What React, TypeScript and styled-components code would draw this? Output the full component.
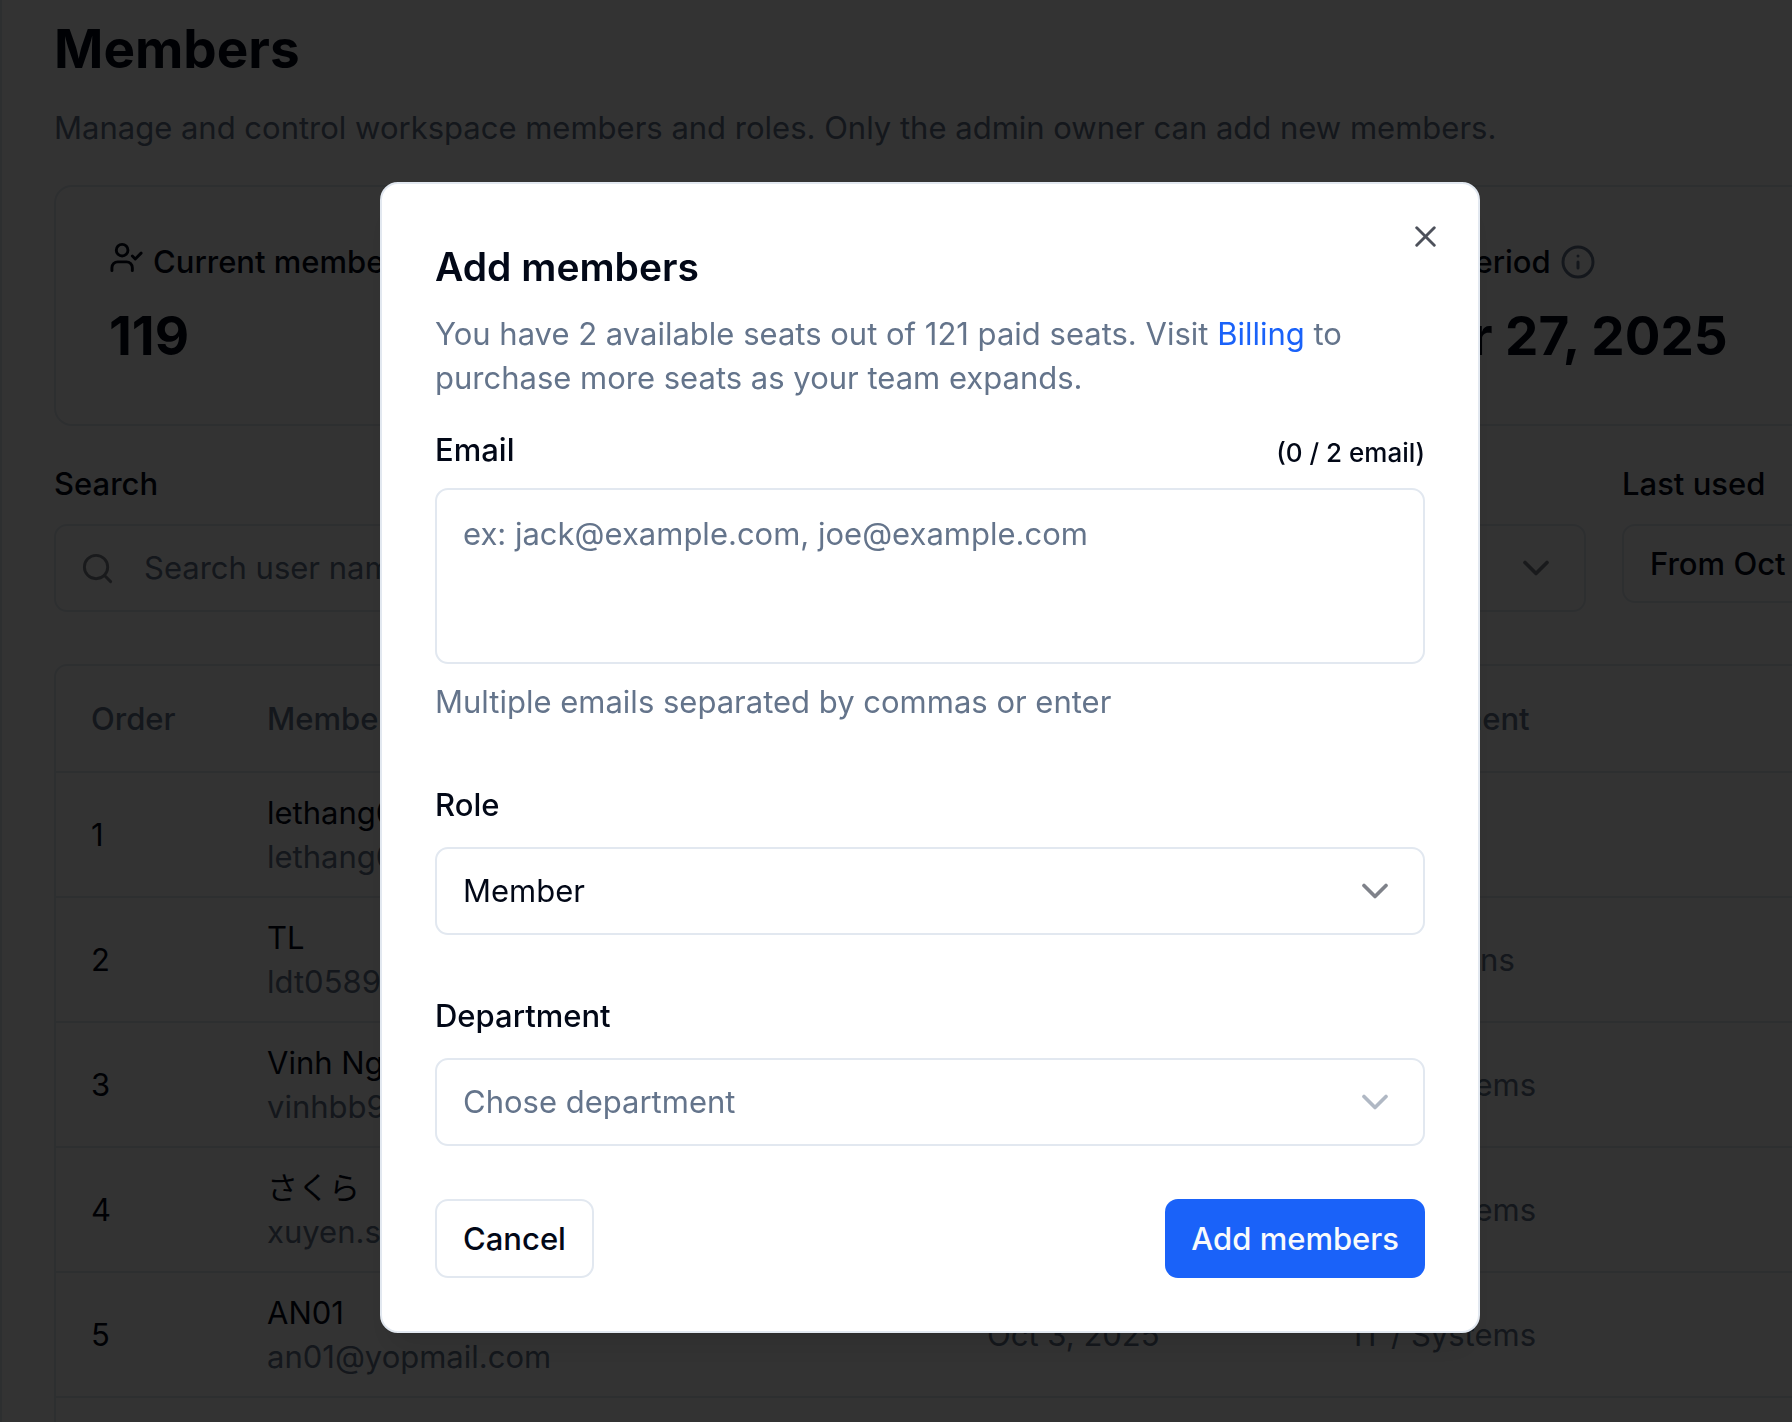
import React from "react";
import styled, { createGlobalStyle, css } from "styled-components";
import { CalendarDays, ChevronDown, Search, X, UserCheck } from "lucide-react";

const color = {
  text: "#020817",
  muted: "#64748b",
  border: "#e2e8f0",
  primary: "#1a62f9",
  surface: "#ffffff",
};

const radius = "13px";

const GlobalStyle = createGlobalStyle`
  *, *::before, *::after { box-sizing: border-box; }
  body {
    margin: 0;
    overflow: hidden;
    background: ${color.surface};
    color: ${color.text};
    font-family: Inter, "Noto Sans CJK JP", sans-serif;
    font-size: 31px;
    line-height: 44px;
    -webkit-font-smoothing: antialiased;
  }
  h1, h2, p, dl, dt, dd { margin: 0; }
  button, input, select, textarea { font: inherit; color: inherit; }
`;

const Page = styled.main`
  height: 100vh;
  overflow: hidden;
  border-left: 2px solid ${color.border};
  padding: 14px 52px 0;
`;

const Content = styled.div`
  min-width: 2200px;
  display: flex;
  flex-direction: column;
`;

const PageTitle = styled.h1`
  font-size: 53px;
  line-height: 70px;
  font-weight: 700;
`;

const Subtitle = styled.p`
  margin-top: 22px;
  color: ${color.muted};
`;

const Stats = styled.dl`
  margin-top: 35px;
  padding: 53px;
  display: grid;
  grid-template-columns: 558px 558px 1fr;
  border: 2px solid ${color.border};
  border-radius: 18px;
`;

const Stat = styled.div`
  display: flex;
  flex-direction: column;
  gap: 17px;
`;

const StatLabel = styled.dt`
  display: flex;
  align-items: flex-start;
  gap: 9px;
  font-weight: 500;
`;

const InfoMark = styled.svg`
  align-self: center;
  width: 36px;
  height: 36px;
  color: ${color.muted};
`;

const StatValue = styled.dd`
  font-size: 53px;
  line-height: 70px;
  font-weight: 700;
`;

const Filters = styled.form`
  margin-top: 36px;
  display: grid;
  grid-template-columns: 748px 748px 1fr;
  gap: 36px;
  align-items: start;
`;

const FilterField = styled.div`
  display: flex;
  flex-direction: column;
  gap: 18px;
`;

const Label = styled.label`
  font-weight: 500;
`;

const box = css`
  border: 2px solid ${color.border};
  border-radius: ${radius};
  background: ${color.surface};
`;

const SearchBox = styled.div`
  ${box}
  height: 88px;
  padding: 0 24px;
  display: flex;
  align-items: center;
  gap: 29px;

  svg { opacity: 0.5; flex: none; }
`;

const SearchInput = styled.input`
  flex: 1;
  min-width: 0;
  padding: 0;
  border: 0;
  outline: 0;
  background: transparent;

  &::placeholder { color: ${color.muted}; opacity: 1; }
`;

const SelectBox = styled.div<{ $empty?: boolean }>`
  display: grid;
  align-items: center;
  color: ${(p) => (p.$empty ? color.muted : color.text)};

  > * { grid-area: 1 / 1; }
  > svg {
    justify-self: end;
    margin-right: 28px;
    opacity: 0.5;
    pointer-events: none;
  }
`;

const Select = styled.select`
  ${box}
  appearance: none;
  width: 100%;
  height: 88px;
  padding: 0 80px 0 26px;
`;

const Button = styled.button`
  ${box}
  height: 79px;
  padding: 0 26px;
  font-weight: 500;
`;

const PrimaryButton = styled(Button)`
  border: 0;
  background: ${color.primary};
  color: #f8fafc;
`;

const DateButton = styled(Button)`
  align-self: start;
`;

const TableFrame = styled.div`
  margin-top: 52px;
  border: 2px solid ${color.border};
  border-radius: ${radius};
  overflow: hidden;
`;

const Table = styled.table`
  width: 100%;
  table-layout: fixed;
  border-collapse: separate;
  border-spacing: 0;
`;

const HeadCell = styled.th<{ $width?: number }>`
  width: ${(p) => (p.$width ? `${p.$width}px` : "auto")};
  height: 107px;
  padding: 0 35px;
  border-bottom: 2px solid ${color.border};
  color: ${color.muted};
  font-weight: 500;
  text-align: left;
`;

const Cell = styled.td<{ $muted?: boolean }>`
  height: 125px;
  padding: 0 35px;
  border-bottom: 2px solid ${color.border};
  color: ${(p) => (p.$muted ? color.muted : color.text)};
  white-space: nowrap;
`;

const MemberEmail = styled.div`
  color: ${color.muted};
`;

const Overlay = styled.div`
  position: fixed;
  inset: 0;
  display: flex;
  justify-content: center;
  align-items: flex-start;
  padding: 182px 0 0 68px;
  background: rgba(0, 0, 0, 0.8);
`;

const Dialog = styled.section`
  position: relative;
  width: 1100px;
  max-width: 100%;
  padding: 53px;
  border: 2px solid ${color.border};
  border-radius: 18px;
  background: ${color.surface};
  box-shadow: 0 22px 33px -7px rgba(0, 0, 0, 0.1), 0 9px 13px -9px rgba(0, 0, 0, 0.1);
`;

const CloseButton = styled.button`
  position: absolute;
  top: 35px;
  right: 35px;
  display: flex;
  padding: 0;
  border: 0;
  background: none;
  opacity: 0.7;
`;

const DialogTitle = styled.h2`
  font-size: 39px;
  line-height: 60px;
  font-weight: 600;
`;

const DialogText = styled.p`
  margin-top: 15px;
  color: ${color.muted};
`;

const Link = styled.a`
  color: ${color.primary};
  text-decoration: none;
`;

const DialogForm = styled.form`
  margin-top: 28px;
  display: flex;
  flex-direction: column;
  gap: 59px;
`;

const Field = styled.div<{ $gap: number }>`
  display: flex;
  flex-direction: column;
  gap: ${(p) => p.$gap}px;
`;

const LabelRow = styled.div`
  display: flex;
  justify-content: space-between;
  align-items: flex-end;
`;

const Counter = styled.span`
  font-size: 26px;
  line-height: 38px;
  font-weight: 500;
`;

const TextArea = styled.textarea`
  ${box}
  display: block;
  width: 100%;
  height: 176px;
  padding: 22px 26px;
  resize: none;

  &::placeholder { color: ${color.muted}; opacity: 1; }
`;

const Hint = styled.p`
  color: ${color.muted};
`;

const Actions = styled.div`
  margin-top: 53px;
  display: flex;
  justify-content: space-between;
`;

const members = [
  { name: "lethang01", email: "lethang01@yopmail.com", used: "Oct 3, 2025", department: "" },
  { name: "TL", email: "ldt0589@yopmail.com", used: "Oct 3, 2025", department: "Operations" },
  { name: "Vinh Nguyen", email: "vinhbb9@yopmail.com", used: "Oct 3, 2025", department: "IT / Systems" },
  { name: "さくら", email: "xuyen.s@yopmail.com", used: "Oct 3, 2025", department: "IT / Systems" },
  { name: "AN01", email: "an01@yopmail.com", used: "Oct 3, 2025", department: "IT / Systems" },
  { name: "AN02", email: "an02@yopmail.com", used: "Oct 3, 2025", department: "IT / Systems" },
];

function InfoIcon() {
  return (
    <InfoMark viewBox="0 0 24 24" fill="none" stroke="currentColor" strokeLinecap="round" aria-hidden="true">
      <circle cx="12" cy="12" r="10" strokeWidth="2" />
      <path d="M12 12v4" strokeWidth="2" />
      <path d="M12 8h.01" strokeWidth="2" />
    </InfoMark>
  );
}

function MembersPage() {
  return (
    <Page>
      <Content>
        <PageTitle>Members</PageTitle>
        <Subtitle>
          Manage and control workspace members and roles. Only the admin owner can add new members.
        </Subtitle>

        <Stats>
          <Stat>
            <StatLabel>
              <UserCheck size={35} />
              Current members
            </StatLabel>
            <StatValue>119</StatValue>
          </Stat>
          <Stat>
            <StatLabel>Paid seats</StatLabel>
            <StatValue>121</StatValue>
          </Stat>
          <Stat>
            <StatLabel>
              <CalendarDays size={35} />
              Team billing period
              <InfoIcon />
            </StatLabel>
            <StatValue>December 27, 2025</StatValue>
          </Stat>
        </Stats>

        <Filters>
          <FilterField>
            <Label htmlFor="search">Search</Label>
            <SearchBox>
              <Search size={35} />
              <SearchInput id="search" type="text" placeholder="Search user name or email" />
            </SearchBox>
          </FilterField>
          <FilterField>
            <Label htmlFor="filter-department">Department</Label>
            <SelectBox>
              <Select id="filter-department">
                <option>All</option>
              </Select>
              <ChevronDown size={44} />
            </SelectBox>
          </FilterField>
          <FilterField>
            <Label htmlFor="last-used">Last used</Label>
            <DateButton id="last-used" type="button">
              From Oct 1, 2025
            </DateButton>
          </FilterField>
        </Filters>

        <TableFrame>
          <Table>
            <thead>
              <tr>
                <HeadCell $width={176}>Order</HeadCell>
                <HeadCell $width={720}>Member</HeadCell>
                <HeadCell $width={367}>Last used</HeadCell>
                <HeadCell>Department</HeadCell>
              </tr>
            </thead>
            <tbody>
              {members.map((m, i) => (
                <tr key={m.email}>
                  <Cell>{i + 1}</Cell>
                  <Cell>
                    <div>{m.name}</div>
                    <MemberEmail>{m.email}</MemberEmail>
                  </Cell>
                  <Cell $muted>{m.used}</Cell>
                  <Cell $muted>{m.department}</Cell>
                </tr>
              ))}
            </tbody>
          </Table>
        </TableFrame>
      </Content>
    </Page>
  );
}

function AddMembersDialog() {
  return (
    <Overlay>
      <Dialog role="dialog" aria-modal="true" aria-labelledby="dialog-title">
        <DialogTitle id="dialog-title">Add members</DialogTitle>
        <DialogText>
          You have 2 available seats out of 121 paid seats. Visit <Link href="#billing">Billing</Link> to
          purchase more seats as your team expands.
        </DialogText>
        <DialogForm id="add-members">
          <Field $gap={16}>
            <LabelRow>
              <Label htmlFor="email">Email</Label>
              <Counter>(0 / 2 email)</Counter>
            </LabelRow>
            <TextArea id="email" placeholder="ex: jack@example.com, joe@example.com" />
            <Hint>Multiple emails separated by commas or enter</Hint>
          </Field>
          <Field $gap={20}>
            <Label htmlFor="role">Role</Label>
            <SelectBox>
              <Select id="role">
                <option>Member</option>
              </Select>
              <ChevronDown size={44} />
            </SelectBox>
          </Field>
          <Field $gap={20}>
            <Label htmlFor="department">Department</Label>
            <SelectBox $empty>
              <Select id="department">
                <option>Chose department</option>
              </Select>
              <ChevronDown size={44} />
            </SelectBox>
          </Field>
        </DialogForm>
        <Actions>
          <Button type="button">Cancel</Button>
          <PrimaryButton type="submit" form="add-members">
            Add members
          </PrimaryButton>
        </Actions>
        <CloseButton type="button" aria-label="Close">
          <X size={35} />
        </CloseButton>
      </Dialog>
    </Overlay>
  );
}

export default function App() {
  return (
    <>
      <GlobalStyle />
      <MembersPage />
      <AddMembersDialog />
    </>
  );
}
